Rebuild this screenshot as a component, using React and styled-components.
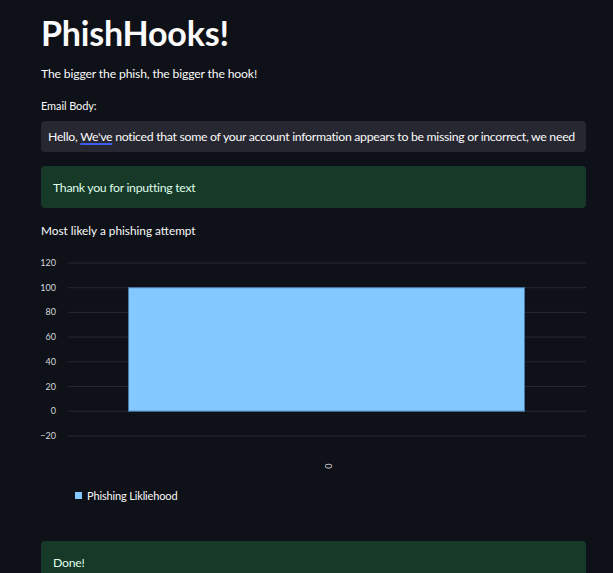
import React from 'react';
import styled, { createGlobalStyle } from 'styled-components';

const GlobalStyle = createGlobalStyle`
    html, body {
        margin: 0;
        padding: 0;
        background: #0e1117;
        overflow: hidden;
    }
    body {
        font-family: Lato, "Noto Sans", sans-serif;
        color: #fafafa;
    }
`;

const Page = styled.div`
    width: 545px;
    padding: 12px 0 0 41px;
    display: flex;
    flex-direction: column;
`;

const Title = styled.h1`
    margin: 0;
    font-size: 34px;
    font-weight: 700;
    line-height: 42px;
    letter-spacing: -0.2px;
`;

const Subtitle = styled.p`
    margin: 11px 0 0;
    font-size: 12.2px;
    letter-spacing: -0.15px;
    line-height: 18px;
`;

const Label = styled.label`
    display: block;
    margin-top: 15px;
    font-size: 11px;
    letter-spacing: -0.1px;
    line-height: 16px;
`;

const InputBox = styled.div`
    margin-top: 7px;
    height: 31px;
    background: #262730;
    border-radius: 4px;
    padding: 0 7px;
    display: flex;
    align-items: center;
    font-size: 12.3px;
    letter-spacing: -0.3px;
    white-space: nowrap;
    overflow: hidden;
`;

const Squiggle = styled.span`
    text-decoration-line: underline;
    text-decoration-color: #3d5cf0;
    text-decoration-thickness: 1.5px;
    text-underline-offset: 2px;
`;

const Alert = styled.div`
    margin-top: ${(p) => p.$gap}px;
    height: ${(p) => p.$h}px;
    background: #173928;
    border-radius: 4px;
    color: #dffde9;
    font-size: 12.3px;
    letter-spacing: -0.3px;
    padding: 0 12px;
    display: flex;
    align-items: ${(p) => (p.$top ? 'flex-start' : 'center')};
    padding-top: ${(p) => (p.$top ? '14px' : '0')};
    box-sizing: border-box;
`;

const Caption = styled.p`
    margin: 14px 0 0;
    font-size: 11.8px;
    line-height: 18px;
`;

const Chart = styled.svg`
    display: block;
    margin: 7px 0 0 -41px;
    overflow: visible;
`;

const Legend = styled.div`
    display: flex;
    align-items: center;
    gap: 5px;
    margin: 12px 0 0 34px;
    font-size: 11px;
    letter-spacing: -0.15px;
`;

const Swatch = styled.span`
    width: 7px;
    height: 7px;
    background: #83c9ff;
`;

const ticks = [120, 100, 80, 60, 40, 20, 0, -20];

function BarChart() {
    const y0 = 262;
    const step = 24.7;
    const top = 246;
    const yOf = (v) => y0 + ((120 - v) / 20) * step - top;
    return (
        <Chart width="613" height="230" viewBox="0 0 613 230">
            {ticks.map((t) => (
                <g key={t}>
                    <line x1="68" x2="586" y1={yOf(t)} y2={yOf(t)} stroke="#262a33" strokeWidth="1" />
                    <text
                        x="56"
                        y={yOf(t) + 3}
                        textAnchor="end"
                        fontSize="9"
                        fill="#d5d7dc"
                        fontFamily="Lato, sans-serif"
                    >
                        {t < 0 ? `\u2212${-t}` : t}
                    </text>
                </g>
            ))}
            <rect
                x="128.5"
                y={yOf(100)}
                width="396"
                height={yOf(0) - yOf(100)}
                fill="#83c9ff"
                stroke="#4a7aa8"
                strokeWidth="1"
            />
            <text
                x="327"
                y={465 - top}
                fontSize="9"
                fill="#d5d7dc"
                fontFamily="Lato, sans-serif"
                textAnchor="middle"
                transform={`rotate(90 327 ${465 - top})`}
                dominantBaseline="middle"
            >
                0
            </text>
        </Chart>
    );
}

export default function App() {
    return (
        <>
            <GlobalStyle />
            <Page>
                <Title>PhishHooks!</Title>
                <Subtitle>The bigger the phish, the bigger the hook!</Subtitle>
                <Label>Email Body:</Label>
                <InputBox>
                    Hello,&nbsp;<Squiggle>We've</Squiggle>&nbsp;noticed that some of your account information appears to be missing or incorrect, we need
                </InputBox>
                <Alert $gap={14} $h={42}>Thank you for inputting text</Alert>
                <Caption>Most likely a phishing attempt</Caption>
                <BarChart />
                <Legend>
                    <Swatch />
                    Phishing Likliehood
                </Legend>
                <Alert $gap={39} $h={50} $top>Done!</Alert>
            </Page>
        </>
    );
}
